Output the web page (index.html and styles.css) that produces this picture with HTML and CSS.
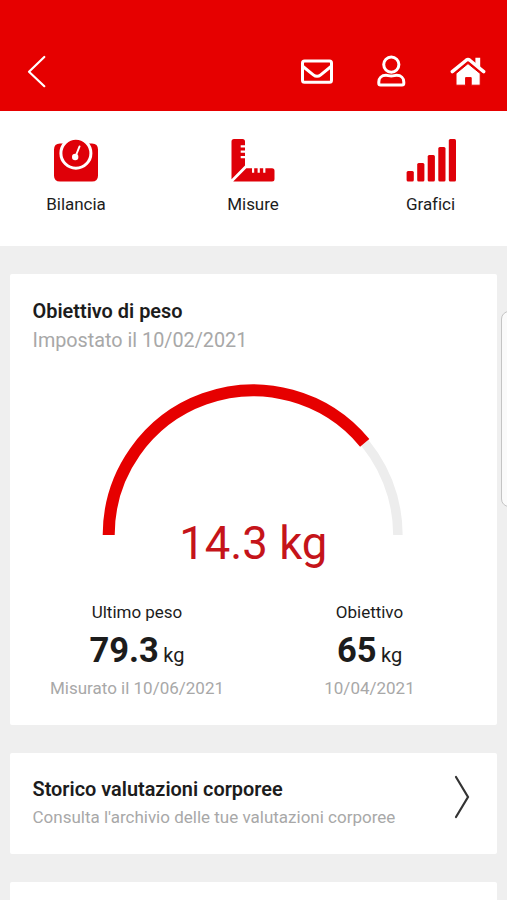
FILE: index.html
```html
<!DOCTYPE html>
<html lang="it">
<head>
<meta charset="utf-8">
<meta name="viewport" content="width=device-width, initial-scale=1">
<title>Peso</title>
<link rel="stylesheet" href="styles.css">
</head>
<body>
<header class="topbar">
  <svg class="back" width="20" height="34" viewBox="0 0 20 34"><path d="M17.3 3 2 17.8 17.3 32.2"/></svg>
  <div class="actions">
    <svg class="mail" width="34" height="26" viewBox="0 0 34 26"><rect x="1.5" y="2" width="29" height="21.2" rx="2"/><path d="M2 7.5 12.3 15.8q3.8 3 7.4 0L30 7.5"/></svg>
    <svg class="user" width="30" height="34" viewBox="0 0 30 34"><circle cx="15.3" cy="10.6" r="7.6"/><path d="M10 21.3c2 0 2.8 .8 5.3 .8s3.3-.8 5.3-.8c4.5 0 7.2 3 7.2 6.6v1.3q0 1.8-1.8 1.8H4.6q-1.8 0-1.8-1.8v-1.3c0-3.6 2.7-6.6 7.2-6.6Z"/></svg>
    <svg class="home" width="36" height="30" viewBox="0 0 36 30"><path class="chimney" d="M25.4 1.8h4.8v10l-4.8-4Z"/><path class="walls" d="M18 7.6 30.2 17.5v10.8q0 .9-.9.9h-8.1v-7.6h-5.6v7.6H6.9q-.9 0-.9-.9V17.5Z"/><path class="roof" d="M2.3 15.6 16.2 4.2q1.8-1.4 3.6 0l13.9 11.4"/></svg>
  </div>
</header>
<nav class="tabs">
  <a class="tab">
    <svg width="50" height="46" viewBox="0 0 50 46"><path d="M9 5.5h32q6 0 6 6v26q0 6-6 6H9q-6 0-6-6v-26q0-6 6-6Z"/><circle class="dial" cx="24.9" cy="15.2" r="15"/><path class="needle" d="m24.5 18.5 4-10"/><circle class="hub" cx="24.2" cy="19" r="3.2"/></svg>
    <span>Bilancia</span>
  </a>
  <a class="tab">
    <svg width="50" height="46" viewBox="0 0 50 46"><path d="M6 1h8.5q2.5 0 2.5 2.5v3.7h-4.3v2.2H17v3.2h-4.3v2.2H17V18h-4.3v2.2H17v7.3L3.5 41.3V3.5Q3.5 1 6 1Z"/><path d="M18.3 30.3h5.7v4.4h2.2v-4.4h3.4v4.4h2.2v-4.4h3.4v4.4h2.2v-4.4h6.6q2.5 0 2.5 2.5v8.2q0 2.5-2.5 2.5H5.2Z"/></svg>
    <span>Misure</span>
  </a>
  <a class="tab">
    <svg width="50" height="46" viewBox="0 0 50 46"><rect x=".6" y="33" width="7.2" height="10.5" rx="1.5"/><rect x="11.2" y="25" width="7.2" height="18.5" rx="1.5"/><rect x="21.7" y="17" width="7.2" height="26.5" rx="1.5"/><rect x="32.3" y="9" width="7.2" height="34.5" rx="1.5"/><rect x="42.8" y="1" width="7.2" height="42.5" rx="1.5"/></svg>
    <span>Grafici</span>
  </a>
</nav>
<main class="content">
  <section class="card goal">
    <h2 class="title">Obiettivo di peso</h2>
    <p class="set-on">Impostato il 10/02/2021</p>
    <div class="gauge">
      <svg width="304" height="154" viewBox="0 0 304 154"><path class="track" d="M7.7 153a144.6 144.6 0 0 1 289.2 0"/><path class="fill" d="M7.7 153A144.6 144.6 0 0 1 263.7 60.8"/></svg>
      <span class="delta">14.3 kg</span>
    </div>
    <div class="stats">
      <div class="stat last">
        <span class="label">Ultimo peso</span>
        <span class="value"><b>79.3</b> <small>kg</small></span>
        <span class="date">Misurato il 10/06/2021</span>
      </div>
      <div class="stat target">
        <span class="label">Obiettivo</span>
        <span class="value"><b>65</b> <small>kg</small></span>
        <span class="date">10/04/2021</span>
      </div>
    </div>
  </section>
  <section class="card history">
    <div>
      <h2 class="title">Storico valutazioni corporee</h2>
      <p class="hint">Consulta l'archivio delle tue valutazioni corporee</p>
    </div>
    <svg class="next" width="16" height="44" viewBox="0 0 16 44"><path d="M2 2 14 22 2 42"/></svg>
  </section>
  <section class="card"></section>
</main>
<aside class="edge-panel"></aside>
</body>
</html>
```
FILE: styles.css
```css
* { box-sizing: border-box; margin: 0; }
body {
  height: 900px;
  overflow: hidden;
  position: relative;
  background: #efefef;
  color: #1c1c1c;
  font-family: Roboto, sans-serif;
}
svg { display: block; fill: none; }
.topbar {
  height: 111px;
  padding: 54px 21px 0 27px;
  display: flex;
  justify-content: space-between;
  background: #e60000;
}
.topbar svg { stroke: #fff; stroke-width: 3; stroke-linejoin: round; }
.topbar .back { stroke-width: 2.2; stroke-linecap: round; }
.actions { display: flex; }
.mail { margin-top: 5px; }
.user { margin: 0 44px 0 41px; }
.home { margin-top: 2px; }
.topbar .chimney { fill: #fff; stroke: none; }
.topbar .walls { fill: #fff; stroke: #e60000; stroke-width: 1; }
.topbar .roof { stroke-width: 3.4; stroke-linecap: round; }
.tabs {
  height: 135px;
  padding: 27px 0 0;
  display: grid;
  grid-template-columns: 152px 202px 153px;
  background: #fff;
}
.tab { display: flex; flex-direction: column; align-items: center; }
.tab svg { fill: #df0008; }
.tab .dial { stroke: #fff; stroke-width: 3; }
.tab .needle { stroke: #fff; stroke-width: 2; stroke-linecap: round; }
.tab .hub { fill: #fff; }
.tab span { margin-top: 9px; font-size: 17px; line-height: 22px; letter-spacing: -.05px; }
.content {
  height: 654px;
  overflow: hidden;
  padding: 28px 10px 0;
  display: flex;
  flex-direction: column;
  gap: 28px;
}
.card { flex: none; background: #fff; border-radius: 2px; padding: 24px 23px 0 22.5px; min-height: 18px; }
.goal { height: 451px; width: 487px; }
.title { font-size: 19.9px; line-height: 26px; font-weight: 600; }
.goal .title { padding-top: 1px; }
.set-on { margin-top: 3px; font-size: 19.8px; line-height: 26px; color: #a8a8a8; }
.gauge { margin-top: 28px; display: flex; flex-direction: column; align-items: center; }
.track { stroke: #ededed; stroke-width: 9.5; }
.fill { stroke: #e60000; stroke-width: 12; }
.delta { margin-top: -19px; font-size: 45.5px; line-height: 54px; color: #c5141a; }
.stats { margin-top: 30px; display: flex; justify-content: space-between; }
.stat { display: flex; flex-direction: column; align-items: center; white-space: nowrap; }
.last { width: 209px; }
.target { width: 209px; }
.label { font-size: 17px; line-height: 22px; letter-spacing: -.02px; }
.value { margin-top: 6px; line-height: 42px; font-size: 18px; }
.value b { font-size: 34.5px; font-weight: 700; }
.value small { font-size: 20px; }
.date { font-size: 17px; line-height: 22px; color: #a8a8a8; }
.history { height: 101px; display: flex; justify-content: space-between; padding-right: 27px; }
.hint { margin-top: 3px; font-size: 17px; line-height: 22px; color: #a8a8a8; }
.next { margin-top: -2px; stroke: #333; stroke-width: 2.2; stroke-linecap: round; }
.edge-panel {
  position: absolute;
  left: 501px;
  top: 311px;
  width: 20px;
  height: 196px;
  border: 1px solid #c4c4c4;
  border-radius: 8px;
  background: #fafafa;
}
```
